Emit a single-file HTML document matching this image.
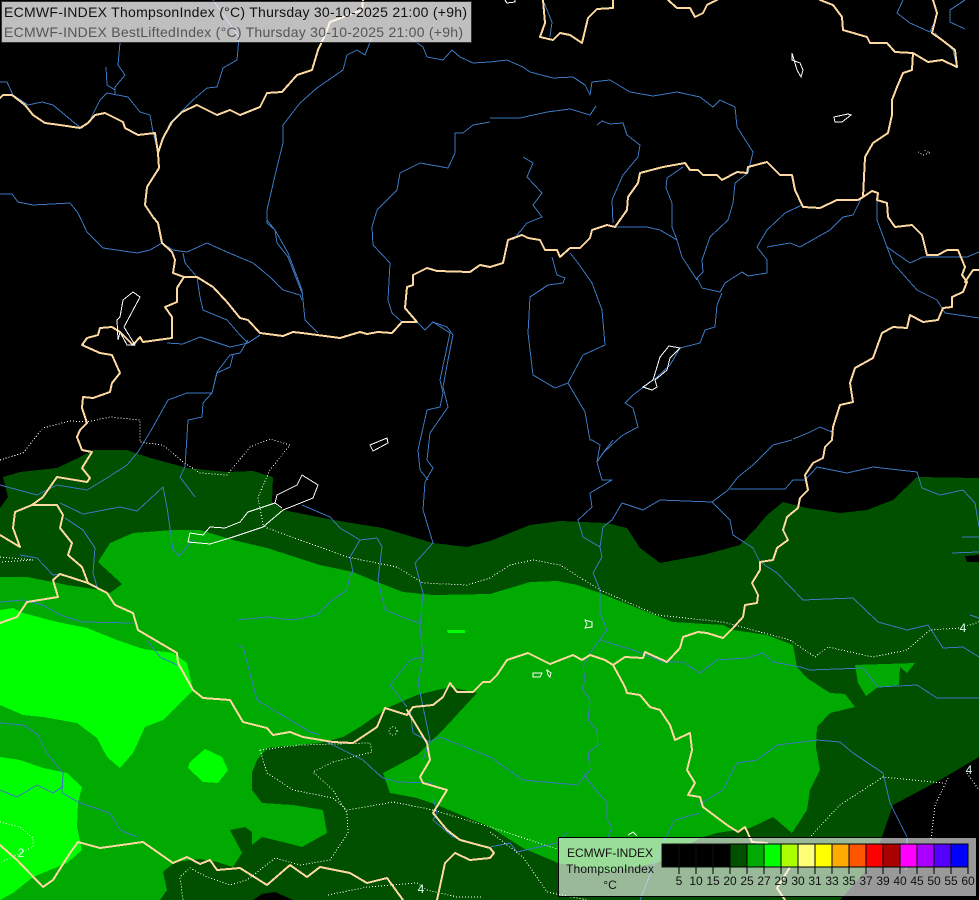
<!DOCTYPE html>
<html><head><meta charset="utf-8"><style>
html,body{margin:0;padding:0;background:#000;width:979px;height:900px;overflow:hidden}
svg{display:block}
text{font-family:"Liberation Sans",sans-serif}
.r{fill:none;stroke:#3c78c0;stroke-width:1;stroke-linejoin:round;shape-rendering:crispEdges}
.b{fill:none;stroke:#fdd8a0;stroke-width:2;stroke-linejoin:round;stroke-linecap:round;shape-rendering:crispEdges}
.l{fill:none;stroke:#fff;stroke-width:1;shape-rendering:crispEdges}
.d{fill:none;stroke:#fff;stroke-width:1;stroke-dasharray:1 2;shape-rendering:crispEdges}
.t{font-size:12px;fill:#111;text-anchor:middle}
</style></head><body>
<svg width="979" height="900" viewBox="0 0 979 900" xmlns="http://www.w3.org/2000/svg">
<rect width="979" height="900" fill="#000"/>
<g shape-rendering="crispEdges">
<polygon fill="#005000" points="3,477 20,472 57,468 80,457 93,450 127,450 147,457 187,468 227,472 253,471 273,477 272,502 283,510 333,520 383,528 433,543 467,547 490,541 530,525 560,521 607,523 627,528 640,548 660,563 703,555 740,545 757,527 767,515 783,502 807,508 840,513 867,510 893,500 917,477 979,478 979,757 940,780 893,805 882,837 867,870 840,900 0,900 0,508 8,497"/>
<polygon fill="#000" points="965,556 979,555 979,562 967,562"/>
<polygon fill="#000" points="253,900 262,894 275,892 293,900"/>
<polygon fill="#00aa00" points="0,577 27,577 53,582 67,585 100,590 110,593 122,584 98,562 110,543 133,533 173,530 200,530 233,540 267,548 320,565 353,572 377,582 403,592 433,595 490,594 530,582 557,581 577,585 600,593 647,612 673,622 723,625 733,630 767,635 793,645 797,667 807,678 830,693 845,694 855,707 830,713 817,727 816,747 820,770 810,790 807,810 792,833 773,817 750,828 717,833 700,838 657,863 607,872 558,863 523,848 490,827 437,805 417,798 390,793 383,773 417,755 430,742 440,733 477,693 450,687 417,695 387,708 360,727 343,737 320,743 267,748 257,760 252,773 252,790 262,803 293,805 323,810 327,833 302,847 287,843 262,837 252,845 252,832 245,827 230,830 242,853 233,867 217,862 200,859 175,862 163,872 167,890 160,900 0,900"/>
<polygon fill="#00aa00" points="855,665 915,663 907,673 900,667 899,685 878,687 866,696 858,683"/>
<polygon fill="#00ff00" points="0,610 13,608 23,613 57,622 87,628 117,640 143,649 173,653 187,663 193,690 163,720 145,727 133,753 120,768 107,757 97,738 77,723 43,717 23,715 0,705"/>
<polygon fill="#00ff00" points="0,757 20,760 43,768 67,773 82,787 78,803 77,827 82,850 67,863 33,877 13,893 0,900"/>
<polygon fill="#00ff00" points="205,749 222,757 228,770 218,783 203,782 188,768 190,762"/>
<polygon fill="#00ff00" points="447,630 465,630 465,633 448,633"/>
</g>

<g class="r">
<polyline points="0,194 12,194 18,202 33,205 70,203 78,213 87,232 103,248 137,253 150,250 162,243 173,250 187,252 207,243 227,252 253,263 270,277 283,290 300,295 302,300"/>
<polyline points="120,43 118,65 125,75 115,87 115,95"/>
<polyline points="106,67 107,85 115,90"/>
<polyline points="0,82 7,82 13,95 28,105 42,102 53,105 77,125 82,128 90,120 100,100 107,93 128,97 140,112 150,115 153,132 158,152 163,140 170,123 193,100 207,88 217,87 223,68 237,60 239,37 213,0"/>
<polyline points="372,37 365,55 357,50 347,55 343,70 317,88 300,103 283,125 283,143 277,167 267,210 267,223 275,230 277,243 288,257 302,293"/>
<polyline points="490,122 473,125 463,133 455,133 455,153 448,168 420,163 400,173 397,190 377,210 372,227 373,245 390,263 388,300 392,313 402,322"/>
<polyline points="410,38 423,47 427,57 443,60 452,50 460,57 473,63 490,62 507,60 523,67 530,72 553,78 573,77 585,85 590,95 592,82 610,80 630,92 653,96 677,92 700,97 713,107 720,100 735,107 737,127 753,152 748,173 735,183 733,203 728,220 710,237 702,260 703,272 697,278 702,288 720,292 725,283 742,272 748,276 767,273 767,260 757,247 767,230 785,213 802,205"/>
<polyline points="490,118 520,118 547,112 570,109 590,115 596,106"/>
<polyline points="597,125 602,121 610,124 623,123 627,135 640,145 638,157 623,175 612,200 613,223"/>
<polyline points="615,227 647,227 660,230 677,240 682,257 697,280"/>
<polyline points="683,167 667,178 666,188 672,203 672,227 677,240"/>
<polyline points="523,157 533,163 527,177 542,193 533,205 542,217 527,223 513,240"/>
<polyline points="552,257 557,275 565,278 563,283 548,285 530,297 528,333 533,375 555,388 568,383 583,355 605,345 602,310 592,283 578,263 570,253"/>
<polyline points="568,383 585,412 590,440 592,440 600,445 597,462 602,480 612,480 590,493 592,507 578,520 583,537 600,547 602,557 593,573 600,590 600,613 607,630 590,653 583,667 585,680 582,688 590,700 588,720 597,730 598,745 588,753 590,770 577,785 523,780 490,757"/>
<polyline points="722,293 717,305 715,327 705,330 700,343 680,348 670,365 657,377 633,395 625,403 633,408 638,427 623,435 617,440 603,453 597,462"/>
<polyline points="767,247 790,243 800,247 830,230 843,217 853,215 862,197"/>
<polyline points="877,197 877,220 887,247 910,263 923,257 967,257 979,252"/>
<polyline points="887,247 893,263 917,290 937,300 945,313 979,318"/>
<polyline points="903,0 897,13 910,23 930,32 933,25"/>
<polyline points="965,0 950,10 950,22 965,29"/>
<polyline points="935,33 953,50 957,67"/>
<polyline points="543,0 552,22 550,37"/>
<polyline points="793,439 808,433 820,427 832,432"/>
<polyline points="167,343 183,344 200,337 230,347 248,343 260,335"/>
<polyline points="248,340 240,353 230,355 217,372 212,393 187,393 168,400 153,427 138,452 127,465 107,478 87,490 57,485 37,495 0,485"/>
<polyline points="233,355 230,367 217,373 212,393 203,403 202,417 188,420 185,467 180,477 195,497"/>
<polyline points="197,277 200,297 203,310 227,320 240,335 248,343"/>
<polyline points="183,253 185,263 197,277"/>
<polyline points="417,322 425,330 433,322 447,327 453,335 448,360 443,387 448,407 430,433 427,460 433,468 425,482 423,510 433,543 415,563 423,593 420,627 423,657 418,683 430,740 423,760"/>
<polyline points="433,322 450,333 440,380 443,393 440,407 427,410 418,450 420,470 428,480"/>
<polyline points="267,220 275,230 288,253 302,290 305,320 318,333"/>
<polyline points="60,503 83,514 120,507 137,511 163,487 167,507 173,550 179,556 193,540"/>
<polyline points="65,518 83,530 95,548 93,573 97,587"/>
<polyline points="20,555 37,558 53,575 60,574"/>
<polyline points="0,602 23,600 43,605 60,615 83,622 133,623"/>
<polyline points="147,640 160,657 177,665"/>
<polyline points="237,620 267,617 293,620 317,615 330,602 347,590 350,575 353,572 350,557 360,540 377,538 382,547 378,580 385,610 410,620 420,623"/>
<polyline points="302,505 330,517 340,528 360,540"/>
<polyline points="238,645 243,647 257,700 277,712 310,732 320,735"/>
<polyline points="422,657 410,660 390,685 407,707"/>
<polyline points="410,710 413,733 430,742 440,737 490,757"/>
<polyline points="327,742 363,760 377,773 383,778 397,782 433,783"/>
<polyline points="0,723 23,725 38,735 47,753 63,773 62,793 80,803 110,813 120,830 137,837"/>
<polyline points="0,790 17,797 37,785 53,793 62,787"/>
<polyline points="433,797 437,813 433,820 453,837 473,843"/>
<polyline points="613,440 603,453"/>
<polyline points="792,440 773,445 753,465 738,477 728,490 712,502 660,500 643,510 622,503 612,520 603,527 600,547"/>
<polyline points="730,489 785,489 793,480 805,480 817,467 847,473 873,467 917,472 922,488 940,495 963,490 975,503 979,527"/>
<polyline points="712,502 730,520 733,535 753,548 760,562 777,573 803,600 853,598 878,622 907,630 928,625 943,648 963,647 979,657"/>
<polyline points="962,537 979,537"/>
<polyline points="952,553 979,552"/>
<polyline points="970,615 979,618"/>
<polyline points="600,640 633,650 663,662 683,662 700,673 717,660 747,658 763,653 773,662 800,667 810,670 863,668 878,687 917,685 937,698 979,698"/>
<polyline points="583,772 590,783 607,803 607,820 612,827 608,837"/>
<polyline points="698,805 723,790 737,763 757,760 777,745 817,740 840,742 853,753 883,773 890,803 907,837 906,870"/>
<polyline points="700,813 675,820 663,842 640,900"/>
<polyline points="490,847 510,843 517,852 557,843 567,833"/>
</g>

<g class="d">
<polyline points="0,460 23,453 43,428 70,421 87,422 110,417 140,420 140,442 163,445 183,462 200,473 227,475 250,447 270,439 290,445 270,470 258,497 263,525 267,528 347,557 397,567 423,583 467,585 490,578 510,565 533,560 560,565 600,590 657,615 723,622 790,640 815,657 828,647 873,657 907,650 930,630 960,628 979,622"/>
<polyline points="943,783 883,777 840,805 810,837"/>
<polyline points="948,778 935,805 931,840"/>
<polyline points="967,773 979,790"/>
<polyline points="490,832 523,857 547,892 587,900"/>
<polyline points="260,750 300,745 370,743 372,752 333,762 313,772 333,790 347,813 348,833 330,860 300,865 275,858 247,880 230,885 207,877 190,868 180,877 183,900"/>
<polyline points="260,750 267,773 293,790 333,798 347,810 393,802 433,810 490,827 560,850"/>
<polyline points="0,822 20,827 33,838 33,847 20,853 0,863"/>
<polyline points="328,895 367,887 417,883 427,890 457,897 482,897"/>
<polyline points="0,557 33,560 0,562"/>
<circle cx="393" cy="731" r="4"/>
<polyline points="918,152 923,155 930,153 924,150"/>
</g>

<g class="b">
<polyline points="0,98 3,95 12,95 25,105 33,115 45,123 60,125 80,128 88,123 95,115 105,113 115,118 123,122 125,128 138,135 155,133 158,153 159,168 147,187 145,205 153,217 158,223 162,243 172,252 175,260 173,273 184,277 197,277 213,287 227,302 240,318 248,320 260,333 283,336 293,332 302,333 340,338 360,332 367,334 378,332 392,333 402,322 417,322 405,308 407,287 413,285 413,275 427,268 437,271 470,272 480,265 490,267 503,263 508,240 522,235 528,238 540,240 545,250 557,250 560,257 570,248 580,248 590,238 592,230 607,225 615,227 627,210 628,197 638,183 640,173 663,167 685,163 690,170 698,170 703,175 717,175 722,180 737,172 747,173 748,167 767,162 780,175 792,175 795,190 803,207 820,208 837,200 858,200 863,197 872,191 878,193 877,200 887,203 888,217 895,227 912,225 922,235 927,255 938,255 947,250 958,250 965,267 962,275 967,282 963,292 952,297 952,307 943,308 938,320 923,322 910,315 907,328 893,327 882,333 873,358 855,368 850,383 853,402 840,405 833,427 832,440 825,447 823,458 813,463 805,475 808,490 800,498 798,508 787,517 783,530 788,540 777,548 773,560 760,562 760,570 752,583 758,595 757,603 745,605 743,617 733,628 723,638 707,633 698,632 683,637 680,648 667,662 645,652 643,658 625,657 613,665 605,660 590,655 582,660 573,655 550,664 528,653 507,660 497,675 490,682 483,682 473,692 457,692 450,683 443,697 433,705 413,707 407,715 385,708 377,727 353,743 333,742 303,737 290,732 273,735 267,728 243,722 230,700 203,698 193,690 178,663 177,653 138,630 133,613 115,605 107,593 88,583 82,567 68,555 72,543 60,528 63,515 57,505 47,505 32,505 15,512 13,528 20,547 0,535"/>
<polyline points="158,153 163,138 172,122 182,112 197,105 217,115 230,110 240,115 260,107 267,93 282,92 297,75 312,70 318,50 325,35 330,22 362,10 363,0"/>
<polyline points="184,277 177,288 177,302 165,307 172,317 172,338 143,342 140,337 133,345 120,332 112,327 100,328 98,335 87,338 82,345 100,353 112,355 120,373 112,383 110,392 93,398 83,397 82,408 87,423 80,430 77,437 82,450 92,452 82,468 90,478 87,482 57,477 43,497 32,505"/>
<polyline points="88,583 60,574 53,580 58,597 27,602 17,617 0,623"/>
<polyline points="0,845 17,860 43,887 53,880 70,853 78,842 100,848 143,842 173,863 187,857 200,864 210,860 217,870 240,868 267,885 290,865 307,877 320,867 350,873 367,883 387,878 403,900"/>
<polyline points="407,710 427,743 430,760 420,777 423,783 447,790 433,813 447,830 460,840 490,848 494,853 490,858 470,860 455,853 445,863 437,900"/>
<polyline points="613,665 625,687 627,693 640,695 650,707 660,710 670,725 675,740 690,733 692,750 687,770 695,783 688,795 700,797 703,807 727,825 738,832 745,827 752,842 767,843 790,867 777,888 785,900"/>
<polyline points="543,0 545,23 540,37 553,40 560,33 570,35 582,43 588,18 597,9 613,8 613,0"/>
<polyline points="668,0 677,8 690,8 695,17 703,13 707,5 717,0"/>
<polyline points="820,0 833,5 842,17 843,30 867,37 870,43 887,43 895,52 913,53 912,70 903,73 897,87 892,100 892,115 888,133 873,143 865,157 863,197"/>
<polyline points="913,53 928,62 942,60 957,67 955,50 942,40 932,33 937,13 933,0"/>
<polyline points="965,282 973,270 979,270"/>
</g>

<g class="l">
<polygon points="275,503 248,512 240,522 225,528 210,527 203,535 190,533 188,542 210,544 230,538 263,527 283,510 313,498 318,485 302,475 297,485 277,495 275,503 282,508"/>
<polygon points="133,292 123,300 120,317 117,320 118,340 120,332 127,345 135,345 124,327 140,297"/>
<polygon points="370,445 387,438 388,443 373,451"/>
<polygon points="792,53 792,60 800,63 803,70 801,77 797,70"/>
<polygon points="834,117 848,114 851,115 842,122 835,122"/>
<polygon points="669,346 680,348 670,358 667,370 655,380 657,387 652,390 643,387 653,380 657,367 660,357"/>
<polyline points="505,0 507,3 515,2 515,0"/>
<polygon points="585,620 592,622 592,627 585,628 587,624"/>
<polygon points="533,673 542,673 540,677 533,677"/>
<polygon points="547,670 551,673 550,677 548,675"/>
<polyline points="628,835 633,832 637,836"/>
</g>

<text x="963" y="632" font-size="12" fill="#dfe" text-anchor="middle">4</text>
<text x="969" y="774" font-size="12" fill="#dfe" text-anchor="middle">4</text>
<text x="421" y="893" font-size="12" fill="#dfe" text-anchor="middle">4</text>
<text x="21" y="857" font-size="12" fill="#dfe" text-anchor="middle">2</text>

<!-- title box -->
<rect x="1.5" y="1.5" width="470" height="41" fill="#fff" fill-opacity=".75" stroke="#333" stroke-width="1"/>
<text x="4" y="17" font-size="14" fill="#111" textLength="463" lengthAdjust="spacing">ECMWF-INDEX ThompsonIndex (°C) Thursday 30-10-2025 21:00 (+9h)</text>
<text x="4" y="37" font-size="14" fill="#555" textLength="459" lengthAdjust="spacing">ECMWF-INDEX BestLiftedIndex (°C) Thursday 30-10-2025 21:00 (+9h)</text>

<!-- legend -->
<rect x="558.5" y="837.5" width="418" height="59" fill="#fff" fill-opacity=".6" stroke="#000" stroke-width="1"/>
<text class="t" x="610" y="857" textLength="86">ECMWF-INDEX</text>
<text class="t" x="610" y="873" textLength="88">ThompsonIndex</text>
<text class="t" x="610" y="889">°C</text>
<g shape-rendering="crispEdges" stroke="#000" stroke-width="1">
<rect x="662" y="844" width="17" height="23" fill="#000" stroke="#111"/>
<rect x="679" y="844" width="17" height="23" fill="#000" stroke="#111"/>
<rect x="696" y="844" width="17" height="23" fill="#000" stroke="#111"/>
<rect x="713" y="844" width="17" height="23" fill="#000" stroke="#111"/>
<rect x="730" y="844" width="17" height="23" fill="#005000"/>
<rect x="747" y="844" width="17" height="23" fill="#00aa00"/>
<rect x="764" y="844" width="17" height="23" fill="#00ff00"/>
<rect x="781" y="844" width="17" height="23" fill="#aaff00"/>
<rect x="798" y="844" width="17" height="23" fill="#ffff77"/>
<rect x="815" y="844" width="17" height="23" fill="#ffff00"/>
<rect x="832" y="844" width="17" height="23" fill="#ffaa00"/>
<rect x="849" y="844" width="17" height="23" fill="#ff5500"/>
<rect x="866" y="844" width="17" height="23" fill="#ff0000"/>
<rect x="883" y="844" width="17" height="23" fill="#aa0000"/>
<rect x="900" y="844" width="17" height="23" fill="#ff00ff"/>
<rect x="917" y="844" width="17" height="23" fill="#aa00ff"/>
<rect x="934" y="844" width="17" height="23" fill="#5500ff"/>
<rect x="951" y="844" width="17" height="23" fill="#0000ff"/>
<path d="M679 867v7M696 867v7M713 867v7M730 867v7M747 867v7M764 867v7M781 867v7M798 867v7M815 867v7M832 867v7M849 867v7M866 867v7M883 867v7M900 867v7M917 867v7M934 867v7M951 867v7M968 867v7" fill="none"/>
</g>
<g>
<text class="t" x="679" y="885">5</text><text class="t" x="696" y="885">10</text><text class="t" x="713" y="885">15</text><text class="t" x="730" y="885">20</text><text class="t" x="747" y="885">25</text><text class="t" x="764" y="885">27</text><text class="t" x="781" y="885">29</text><text class="t" x="798" y="885">30</text><text class="t" x="815" y="885">31</text><text class="t" x="832" y="885">33</text><text class="t" x="849" y="885">35</text><text class="t" x="866" y="885">37</text><text class="t" x="883" y="885">39</text><text class="t" x="900" y="885">40</text><text class="t" x="917" y="885">45</text><text class="t" x="934" y="885">50</text><text class="t" x="951" y="885">55</text><text class="t" x="968" y="885">60</text>
</g>
</svg>
</body></html>
